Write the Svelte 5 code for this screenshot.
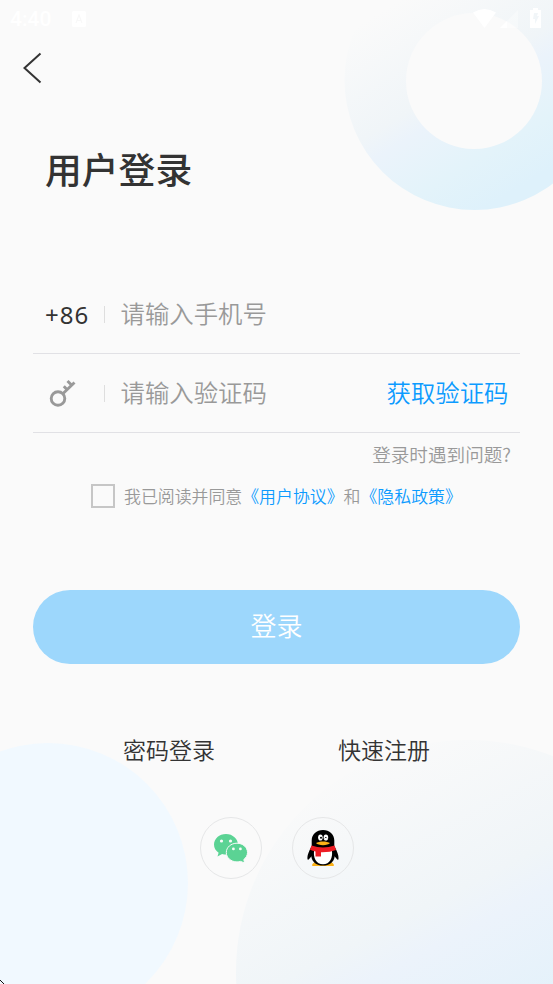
<script>
  let phone = $state('');
  let code = $state('');
  let agreed = $state(false);
</script>

<main>
  <svg class="backdrop" viewBox="0 0 553 984" aria-hidden="true">
    <defs>
      <linearGradient id="ring" gradientUnits="userSpaceOnUse" x1="375" y1="15" x2="490" y2="205">
        <stop offset="0" stop-color="#fafafa" />
        <stop offset=".45" stop-color="#f0f5f8" />
        <stop offset=".55" stop-color="#ebf3fb" />
        <stop offset=".8" stop-color="#e3f3fa" />
        <stop offset="1" stop-color="#def1fb" />
      </linearGradient>
      <linearGradient id="disc" gradientUnits="userSpaceOnUse" x1="335" y1="770" x2="485" y2="1060">
        <stop offset="0" stop-color="#fafafa" />
        <stop offset=".5" stop-color="#f0f5f8" />
        <stop offset=".62" stop-color="#ecf3fb" />
        <stop offset="1" stop-color="#e2f1fa" />
      </linearGradient>
    </defs>
    <circle cx="474.500" cy="80" r="130" fill="url(#ring)" />
    <circle cx="474" cy="81" r="68" fill="#fafafa" />
    <circle cx="48" cy="883" r="140" fill="#f1f9ff" />
    <circle cx="468" cy="972" r="232" fill="url(#disc)" />
    <path d="M0 980h1v1h1v1h1v1h1v1H3v-1H2v-1H1v-1H0z" fill="#111" />
  </svg>

  <div class="status">
    <span class="clock">4:40</span>
    <svg class="app" width="15" height="16" viewBox="0 0 15 16">
      <rect width="14" height="16" rx="1.5" fill="#fff" />
      <path d="M4 12 7 4l3 8M5 9.5h4" fill="none" stroke="#f8f8f8" stroke-width="1.2" />
    </svg>
    <svg class="signals" width="74" height="22" viewBox="0 0 74 22" fill="#fff">
      <path d="M3 4.500Q14.500-2.500 26 4.500L14.500 20z" />
      <path d="M30 20 48 2v18z" opacity=".35" />
      <path d="M30 20 37 13v7z" />
      <path fill-rule="evenodd" d="M60 2h3V0h5v2h3v18H60zM64 5l-1 6h2v5l4-8h-2l1-3z" />
    </svg>
  </div>

  <button class="back" aria-label="返回">
    <svg width="19" height="32" viewBox="0 0 19 32"><path d="M17.500 1.500 1.500 16l16 14.500" fill="none" stroke="#333" stroke-width="2" /></svg>
  </button>

  <h1>用户登录</h1>

  <section class="form">
    <div class="row">
      <span class="prefix">+86</span>
      <i></i>
      <input bind:value={phone} placeholder="请输入手机号" />
    </div>
    <div class="row">
      <span class="prefix key">
        <svg width="28" height="30" viewBox="0 0 28 30" fill="none" stroke="#999">
          <circle cx="9" cy="20.500" r="6.800" stroke-width="2.900" />
          <path d="M13.800 15.700 25.500 4.500M18 11.500l-3.200-3.200M22.500 7 18.500 3" stroke-width="2.900" />
        </svg>
      </span>
      <i></i>
      <input bind:value={code} placeholder="请输入验证码" />
      <button class="send">获取验证码</button>
    </div>
  </section>

  <div class="help">登录时遇到问题?</div>

  <div class="agree">
    <button class="check" class:agreed aria-label="同意" onclick={() => (agreed = !agreed)}></button>
    <p>我已阅读并同意<a href="#terms">《用户协议》</a>和<a href="#privacy">《隐私政策》</a></p>
  </div>

  <button class="login">登录</button>

  <nav><span>密码登录</span><span>快速注册</span></nav>

  <div class="social">
    <span class="round">
      <svg width="62" height="62" viewBox="0 0 62 62">
        <g fill="#5bd394">
          <path d="M26 17c-6.800 0-12 4.700-12 10.600 0 3.400 1.700 6.300 4.600 8.200L17.500 39.500l4.600-2.400c1.300.4 2.600.5 3.900.5 6.800 0 12-4.400 12-10S32.800 17 26 17z" />
          <path d="M37 26.200c-6 0-10.700 4.100-10.700 9.300S31 44.900 37 44.900c1.200 0 2.500-.2 3.600-.5L44.600 46l-.8-3.500c2.300-1.700 3.700-4.200 3.700-7 0-5.200-4.700-9.300-10.500-9.300z" stroke="#fafafa" stroke-width="1" />
        </g>
        <g fill="#fafafa"><circle cx="21.500" cy="24" r="1.600" /><circle cx="30.500" cy="24" r="1.600" /><circle cx="33.400" cy="31.900" r="1.400" /><circle cx="40.400" cy="31.900" r="1.400" /></g>
      </svg>
    </span>
    <span class="round">
      <svg width="62" height="62" viewBox="0 0 62 62">
        <path d="M20 48c1-2.600 4-3.500 7-3.500h8c3 0 6 .9 7 3.500.2.800-.5 1-2 1H22c-1.500 0-2.200-.2-2-1z" fill="#fbb116" />
        <path d="M31 13c-6.500 0-11.300 4.500-11.300 10.500V29c-2.500 5-4.700 9-4.200 13.300.5 1.500 2.500-1 3.800-3 .5 6 5.700 9.300 11.700 9.300s11.200-3.300 11.700-9.300c1.300 2 3.300 4.500 3.800 3C47 38 44.800 34 42.300 29v-5.500C42.300 17.500 37.500 13 31 13z" fill="#000" />
        <path d="M22.300 32h17.400c1.700 9-2 15.300-8.700 15.300S20.600 41 22.300 32z" fill="#fff" />
        <ellipse cx="28.400" cy="20.500" rx="2.300" ry="3.100" fill="#fff" />
        <ellipse cx="33.900" cy="20.500" rx="2.300" ry="3.100" fill="#fff" />
        <circle cx="29" cy="20.700" r="1" />
        <path d="M32.800 21.200q1-2 2 0" fill="none" stroke="#000" stroke-width=".9" />
        <path d="M24 26.100c3-2.100 11-2.100 14 0-2 2.800-12 2.800-14 0z" fill="#fbb116" />
        <path d="M19.500 28.500q11.500 3.800 23 0L44 33q-6 2.500-15 2.300v4.200h-5.500v-5q-3-.5-5.500-1.700z" fill="#ed1c24" />
      </svg>
    </span>
  </div>
</main>

<style>
  :global(body) { margin: 0; }
  main {
    position: relative;
    isolation: isolate;
    box-sizing: border-box;
    width: 553px;
    height: 984px;
    overflow: hidden;
    display: flex;
    flex-direction: column;
    background: #fafafa;
    color: #333;
    font-family: "Noto Sans CJK SC", sans-serif;
    font-weight: 350;
  }
  button, input { padding: 0; border: 0; background: none; font: inherit; }
  svg { display: block; }
  .backdrop { position: absolute; inset: 0; z-index: -1; }
  .status { height: 38px; display: flex; align-items: center; padding: 0 9px 0 10px; box-sizing: border-box; color: #fff; }
  .clock { font: 500 21px/38px Roboto, sans-serif; width: 62px; }
  .signals { margin-left: auto; }
  .back { width: 19px; height: 32px; margin: 14px 0 0 23px; }
  h1 { margin: 57px 0 0 45px; height: 54px; line-height: 54px; font-size: 36.8px; font-weight: 500; }
  .form { margin: 80px 33px 0; }
  .row { box-sizing: border-box; height: 79px; display: flex; align-items: center; border-bottom: 1px solid #e1e1e5; padding-left: 12px; }
  .prefix { width: 59px; font: 24px/36px "Noto Sans", sans-serif; letter-spacing: 1px; padding-top: 1px; }
  .key { padding-left: 4px; width: 55px; padding-top: 0; }
  i { width: 1px; height: 17px; background: #dedede; margin-right: 15.500px; }
  input { width: 200px; height: 38px; line-height: 38px; font-size: 24.4px; outline: 0; margin-bottom: 2px; }
  input::placeholder { color: #999; opacity: 1; }
  .send { margin: 0 11.500px 2px auto; font-size: 24.4px; line-height: 38px; color: #0c9bff; }
  .help { height: 28px; margin: 7px 42px 0 0; line-height: 28px; text-align: right; font-size: 18.6px; color: #999; }
  .agree { margin: 15px 0 0 91px; height: 25px; display: flex; align-items: center; }
  .check { box-sizing: border-box; width: 24px; height: 24px; border: 2px solid #c6c6c6; margin-right: 9px; }
  .agreed { background: #0c9bff; }
  .agree p { margin: 0; font-size: 16.9px; line-height: 25px; white-space: nowrap; color: #999; }
  a { color: #0c9bff; text-decoration: none; }
  .login { margin: 82px 33px 0; height: 74px; border-radius: 37px; background: #9dd7fc; color: #fff; font-size: 26px; line-height: 68px; padding-bottom: 5px; }
  nav { display: flex; justify-content: space-between; margin: 67px 123px 0; font-size: 23px; line-height: 36px; }
  .social { display: flex; justify-content: center; gap: 30px; margin: 50px 0 0; }
  .round { box-sizing: border-box; width: 62px; height: 62px; border: 1px solid #e6e7e8; border-radius: 50%; display: grid; place-items: center; }
  .round svg { margin: -1px; }
</style>
